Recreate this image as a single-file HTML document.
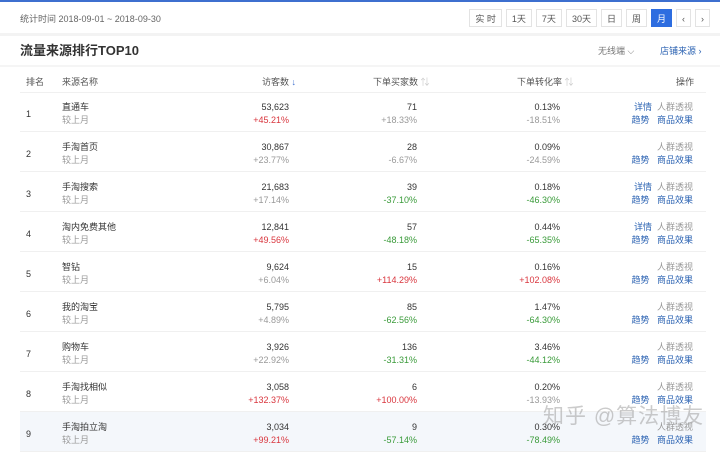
<!DOCTYPE html>
<html><head><meta charset="utf-8"><style>
*{margin:0;padding:0;box-sizing:border-box}
body{width:720px;height:444px;overflow:hidden;background:#fff;font-family:"Liberation Sans","Noto Sans CJK SC",sans-serif;font-size:9px;color:#333;position:relative}
.topline{position:absolute;left:0;top:0;width:720px;height:2px;background:#3d6fcf}
.stat{position:absolute;left:20px;top:12px;color:#666;font-size:9px}
.btns{position:absolute;top:9px;right:10px;display:flex;gap:4px}
.btns span{display:block;height:18px;line-height:18px;padding:0 5px;border:1px solid #e3e3e3;color:#555;font-size:9px;background:#fff}
.btns span.on{background:#2d6de0;color:#fff;border-color:#2d6de0}
.band{position:absolute;left:0;top:33px;width:720px;height:3px;background:#f3f3f3}
.title{position:absolute;left:20px;top:40px;font-size:13px;font-weight:bold;color:#333}
.filt{position:absolute;left:598px;top:44px;color:#777;font-size:9px}
.src{position:absolute;left:660px;top:44px;color:#2d64b3;font-size:9px}
.sep{position:absolute;left:0;top:65px;width:720px;height:2px;background:#f5f5f5}
.hdr{position:absolute;top:75px;color:#555;font-size:9px}
.row{position:absolute;left:20px;width:686px;height:40px;border-bottom:1px solid #f0f0f0}
.row.hl{background:#f4f7fb}
.c{position:absolute;font-size:9px;line-height:13px}
.g{color:#999}.r{color:#d9363e}.gr{color:#3a9b3a}.b{color:#2d64b3}
.wm{position:absolute;left:543px;top:400px;font-size:21px;color:rgba(160,160,160,0.55);letter-spacing:1px}
</style></head><body>
<div class="topline"></div>
<div class="stat">统计时间 2018-09-01 ~ 2018-09-30</div>
<div class="btns"><span>实 时</span><span>1天</span><span>7天</span><span>30天</span><span>日</span><span>周</span><span class="on">月</span><span>‹</span><span>›</span></div>
<div class="band"></div>
<div class="title">流量来源排行TOP10</div>
<div class="filt">无线端 ⌵</div>
<div class="src">店铺来源 ›</div>
<div class="sep"></div>
<div class="hdr" style="left:26px">排名</div>
<div class="hdr" style="left:62px">来源名称</div>
<div class="hdr" style="left:262px">访客数 <span style="color:#3d6fcf">↓</span></div>
<div class="hdr" style="left:373px">下单买家数 <span style="color:#ccc">⇅</span></div>
<div class="hdr" style="left:517px">下单转化率 <span style="color:#ccc">⇅</span></div>
<div class="hdr" style="left:676px">操作</div>
<div style="position:absolute;left:20px;top:92px;width:686px;height:1px;background:#f0f0f0"></div>
<div id="rows"></div>
<script>
var d=[
["1","直通车","53,623","+45.21%","r","71","+18.33%","g","0.13%","-18.51%","g",1],
["2","手淘首页","30,867","+23.77%","g","28","-6.67%","g","0.09%","-24.59%","g",0],
["3","手淘搜索","21,683","+17.14%","g","39","-37.10%","gr","0.18%","-46.30%","gr",1],
["4","淘内免费其他","12,841","+49.56%","r","57","-48.18%","gr","0.44%","-65.35%","gr",1],
["5","智钻","9,624","+6.04%","g","15","+114.29%","r","0.16%","+102.08%","r",0],
["6","我的淘宝","5,795","+4.89%","g","85","-62.56%","gr","1.47%","-64.30%","gr",0],
["7","购物车","3,926","+22.92%","g","136","-31.31%","gr","3.46%","-44.12%","gr",0],
["8","手淘找相似","3,058","+132.37%","r","6","+100.00%","r","0.20%","-13.93%","g",0],
["9","手淘拍立淘","3,034","+99.21%","r","9","-57.14%","gr","0.30%","-78.49%","gr",0]];
var h="";
d.forEach(function(x,i){
var t=92+i*40;
h+='<div class="row'+(i==8?' hl':'')+'" style="top:'+t+'px">'+
'<div class="c" style="left:6px;top:16px">'+x[0]+'</div>'+
'<div class="c" style="left:42px;top:9px">'+x[1]+'<br><span class="g">较上月</span></div>'+
'<div class="c" style="right:417px;top:9px;text-align:right">'+x[2]+'<br><span class="'+x[4]+'">'+x[3]+'</span></div>'+
'<div class="c" style="right:289px;top:9px;text-align:right">'+x[5]+'<br><span class="'+x[7]+'">'+x[6]+'</span></div>'+
'<div class="c" style="right:146px;top:9px;text-align:right">'+x[8]+'<br><span class="'+x[10]+'">'+x[9]+'</span></div>'+
'<div class="c" style="right:13px;top:9px;text-align:right">'+(x[11]?'<span class="b">详情</span>&nbsp;&nbsp;':'')+'<span class="g">人群透视</span><br><span class="b">趋势</span>&nbsp;&nbsp;&nbsp;<span class="b">商品效果</span></div>'+
'</div>';});
document.getElementById("rows").innerHTML=h;
</script>
<div class="wm">知乎 @算法博友</div>
</body></html>
